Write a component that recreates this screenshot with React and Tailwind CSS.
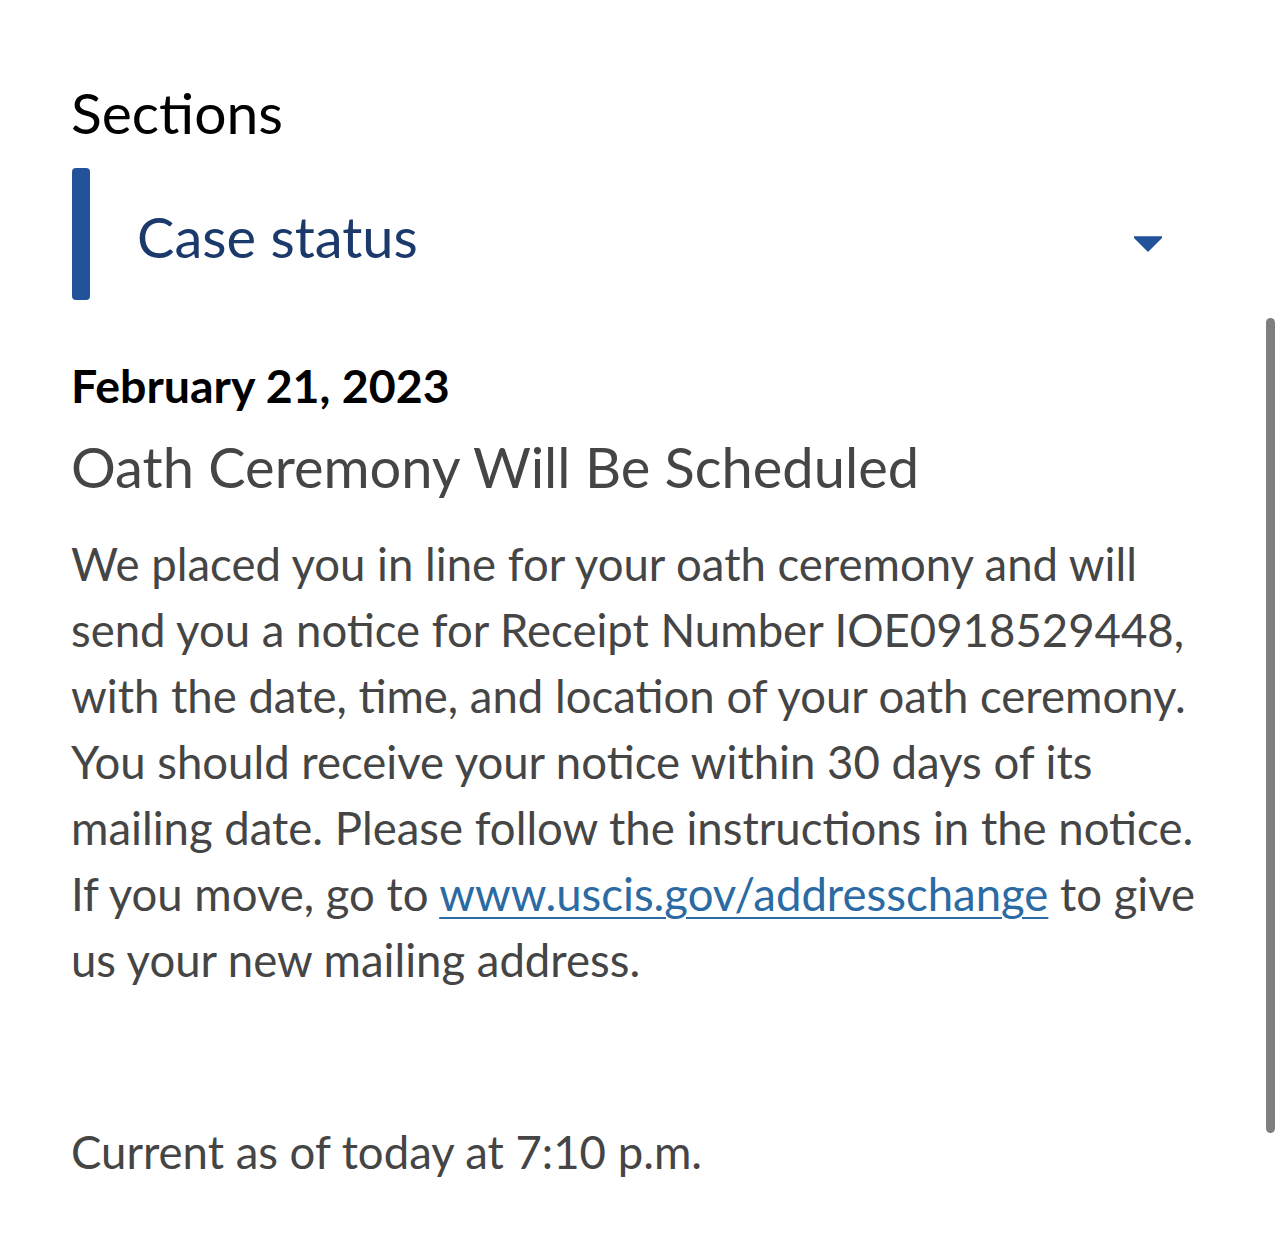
export default function App() {
  return (
    <div className="relative min-h-screen bg-white font-['Lato',sans-serif]">
      <div className="pl-[71px] pr-[66px] pt-[84px]">
        <h2 className="text-[57px] leading-none text-black">Sections</h2>

        <button className="mt-[27px] flex h-[132px] w-full items-stretch text-left">
          <span className="ml-[1px] w-[18px] rounded-[4px] bg-[#22539a]" />
          <span className="flex flex-1 items-center justify-between pl-[47px] pr-[56px]">
            <span className="mt-[6px] text-[56px] leading-none text-[#1b3a6b]">Case status</span>
            <svg width="28" height="16" viewBox="0 0 28 16" className="mt-[20px]">
              <path d="M0 1 L28 1 L14 15 Z" fill="#22539a" strokeLinejoin="round" stroke="#22539a" strokeWidth="1.5" />
            </svg>
          </span>
        </button>

        <div className="mt-[62px] text-[#454545]">
          <p className="text-[46.5px] font-bold leading-none text-black">February 21, 2023</p>
          <h3 className="mt-[30px] text-[56px] leading-none">Oath Ceremony Will Be Scheduled</h3>
          <p className="mt-[36px] text-[45.5px] leading-[66px]">
            We placed you in line for your oath ceremony and will send you a notice for Receipt Number
            IOE0918529448, with the date, time, and location of your oath ceremony. You should receive your
            notice within 30 days of its mailing date. Please follow the instructions in the notice. If you
            move, go to{' '}
            <a href="#" className="text-[#2b6aa3] underline decoration-2 underline-offset-[6px]">
              www.uscis.gov/addresschange
            </a>{' '}
            to give us your new mailing address.
          </p>
          <p className="mt-[126px] text-[45.5px] leading-[66px]">Current as of today at 7:10 p.m.</p>
        </div>
      </div>

      <div className="absolute left-[1266px] top-[318px] h-[815px] w-[9px] rounded-full bg-[#7f7f7f]" />
    </div>
  );
}
